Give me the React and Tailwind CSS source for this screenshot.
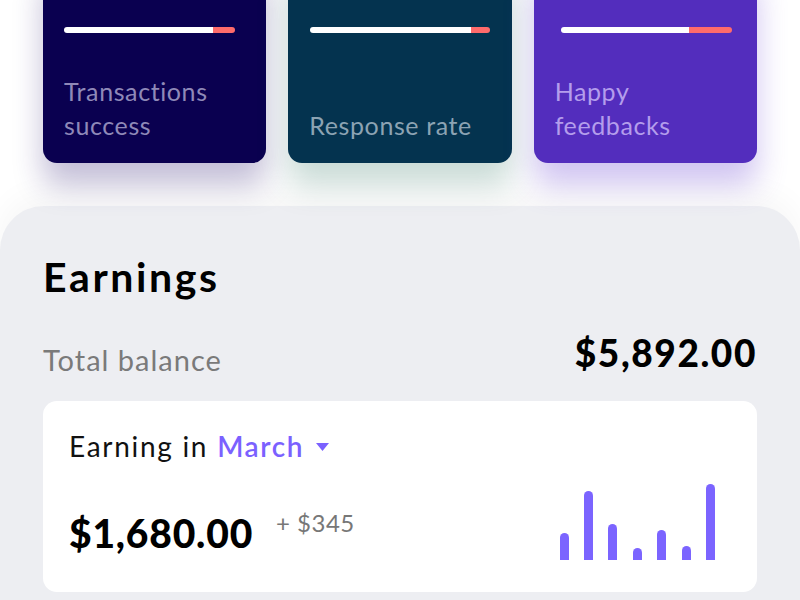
import React from "react";

const cards = [
  {
    bg: "bg-[#0A0050]",
    shadow: "shadow-[0_22px_30px_rgba(40,20,110,0.28)]",
    text: "text-[#8F89B8]",
    barMl: "ml-0",
    barW: "w-[171px]",
    redW: "w-[22px]",
    lines: ["Transactions", "success"],
  },
  {
    bg: "bg-[#04334F]",
    shadow: "shadow-[0_22px_30px_rgba(40,110,90,0.25)]",
    text: "text-[#8CA3B3]",
    barMl: "ml-px",
    barW: "w-[180px]",
    redW: "w-[19px]",
    lines: ["Response rate"],
  },
  {
    bg: "bg-[#532DBD]",
    shadow: "shadow-[0_22px_30px_rgba(110,70,210,0.32)]",
    text: "text-[#B49DEC]",
    barMl: "ml-[6px]",
    barW: "w-[171px]",
    redW: "w-[43px]",
    lines: ["Happy", "feedbacks"],
  },
];

const bars = [27, 69, 36, 12, 30, 14, 76];

export default function App() {
  return (
    <div className="w-[800px] h-[600px] overflow-hidden bg-white font-['Lato',sans-serif]">
      <div className="flex gap-[22px] px-[43px] -mt-[40px]">
        {cards.map((c, i) => (
          <div
            key={i}
            className={`flex-1 h-[203px] rounded-[14px] ${c.bg} ${c.shadow} px-[21px] pt-[67px] pb-[21px] flex flex-col justify-between`}
          >
            <div className={`flex h-[6px] rounded-full overflow-hidden ${c.barMl} ${c.barW}`}>
              <div className="flex-1 bg-white" />
              <div className={`${c.redW} bg-[#FF6B6B]`} />
            </div>
            <div className={`${c.text} text-[25px] leading-[34px] font-normal tracking-[0.6px]`}>
              {c.lines.map((l, j) => (
                <div key={j}>{l}</div>
              ))}
            </div>
          </div>
        ))}
      </div>

      <div className="mt-[43px] h-[420px] rounded-t-[44px] bg-[#EDEEF2] shadow-[0_-12px_30px_rgba(0,0,0,0.035)] px-[43px] pt-[49px]">
        <div className="text-[41px] leading-[44px] font-bold text-black tracking-[2.6px]">Earnings</div>
        <div className="mt-[39px] flex items-center justify-between">
          <div className="text-[29px] text-[#7A7A7A] font-normal tracking-[1px]">Total balance</div>
          <div className="text-[37px] font-black text-black -mt-[14px] tracking-[1.6px]">$5,892.00</div>
        </div>
        <div className="mt-[19px] h-[191px] rounded-[14px] bg-white pl-[26px] pr-[42px] pt-[24px] flex flex-col">
          <div className="flex items-center text-[28px] text-[#111] tracking-[1.7px]">
            <span>Earning in</span>
            <span className="ml-[9px] text-[#7B61FF] font-semibold tracking-[1.6px]">March</span>
            <svg className="ml-[12px] mt-[2px]" width="13" height="8" viewBox="0 0 13 8">
              <path d="M0 0 L13 0 L6.5 8 Z" fill="#7B61FF" />
            </svg>
          </div>
          <div className="flex items-end justify-between mt-auto mb-[32px]">
            <div className="flex items-start mb-[5px]">
              <div className="text-[39px] leading-[44px] font-black text-black tracking-[0.8px]">$1,680.00</div>
              <div className="ml-[23px] text-[24px] text-[#777] -mt-[6px] tracking-[0.5px]">+ $345</div>
            </div>
            <div className="flex items-end gap-[15.4px]">
              {bars.map((h, i) => (
                <div
                  key={i}
                  className="w-[9px] rounded-t-full bg-[#7B64FF]"
                  style={{ height: h }}
                />
              ))}
            </div>
          </div>
        </div>
      </div>
    </div>
  );
}
